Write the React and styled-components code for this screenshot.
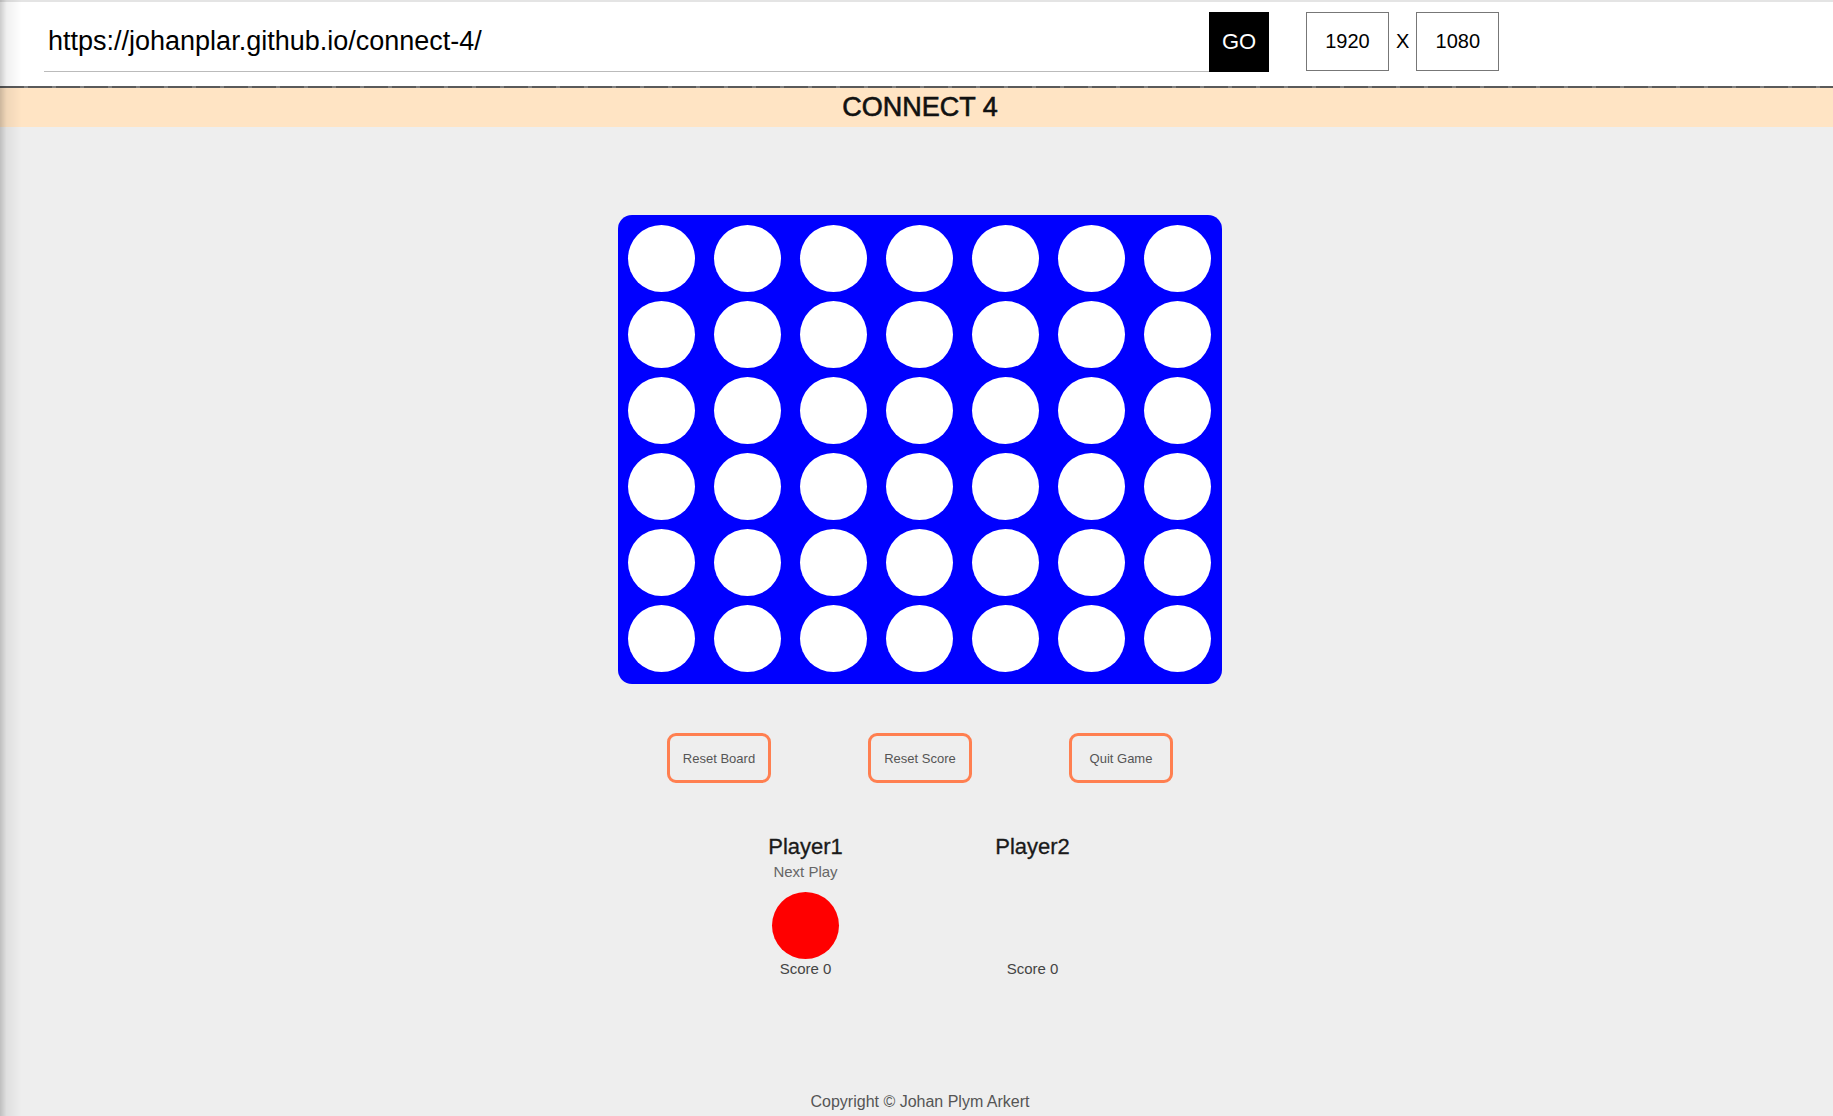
import React from 'react';
import styled, { createGlobalStyle } from 'styled-components';

const GlobalStyle = createGlobalStyle`
  html, body {
    margin: 0;
    padding: 0;
    background: #eeeeee;
    font-family: 'Liberation Sans', Arial, sans-serif;
  }
  * {
    box-sizing: border-box;
  }
`;

const Page = styled.div`
  position: relative;
  min-height: 100vh;
  background: #eeeeee;

  &::after {
    content: '';
    position: fixed;
    left: 0;
    top: 0;
    bottom: 0;
    width: 22px;
    pointer-events: none;
    background: linear-gradient(to right, rgba(0, 0, 0, 0.2), rgba(0, 0, 0, 0.06) 30%, rgba(0, 0, 0, 0));
  }
`;

const Toolbar = styled.div`
  display: flex;
  align-items: flex-start;
  height: 88px;
  padding: 10px 0 0 44px;
  background: #ffffff;
  border-top: 2px solid #e4e4e4;
  position: relative;

  &::after {
    content: '';
    position: absolute;
    left: 0;
    right: 0;
    bottom: 0;
    height: 2px;
    background: repeating-linear-gradient(to right, #5a5a5a 0 24px, #808080 24px 28px);
  }
`;

const UrlInput = styled.input`
  width: 1165px;
  height: 60px;
  padding: 0 0 0 4px;
  border: none;
  border-bottom: 1px solid #bbbbbb;
  outline: none;
  background: transparent;
  font-family: 'Liberation Sans', Arial, sans-serif;
  font-size: 27px;
  color: #000;
`;

const GoButton = styled.button`
  width: 60px;
  height: 60px;
  margin-right: 37px;
  border: none;
  padding: 0;
  background: #000000;
  color: #ffffff;
  font-family: 'Liberation Sans', Arial, sans-serif;
  font-size: 22px;
  cursor: pointer;
`;

const SizeInput = styled.input`
  width: 83px;
  height: 59px;
  padding: 0;
  border: 1px solid #777777;
  outline: none;
  text-align: center;
  font-family: 'Liberation Sans', Arial, sans-serif;
  font-size: 20px;
  color: #000;
`;

const Times = styled.span`
  margin: 0 7px;
  line-height: 59px;
  font-size: 20px;
  color: #000;
`;

const TitleBar = styled.header`
  height: 39px;
  background: #ffe4c4;
  display: flex;
  justify-content: center;
  align-items: center;
  padding-left: 7px;
  font-size: 27px;
  color: #111;
  -webkit-text-stroke: 0.6px #111;
`;

const Main = styled.main`
  display: flex;
  flex-direction: column;
  align-items: center;
  padding-left: 7px;
`;

const Board = styled.div`
  margin-top: 88px;
  display: grid;
  grid-template-columns: repeat(7, 67px);
  grid-auto-rows: 67px;
  column-gap: 19px;
  row-gap: 9px;
  padding: 10px 11px 12px 10px;
  background: #0000ff;
  border-radius: 14px;
`;

const Slot = styled.div`
  width: 67px;
  height: 67px;
  border-radius: 50%;
  background: ${(props) => props.color || '#ffffff'};
`;

const Controls = styled.div`
  margin-top: 49px;
  display: flex;
  gap: 97px;
`;

const ControlButton = styled.button`
  width: 104px;
  height: 50px;
  padding: 0;
  border: 3px solid #ff7f50;
  border-radius: 9px;
  background: transparent;
  font-family: 'Liberation Sans', Arial, sans-serif;
  font-size: 13px;
  color: #555;
  cursor: pointer;
`;

const Players = styled.div`
  margin-top: 51px;
  padding-right: 2px;
  display: grid;
  grid-template-columns: repeat(2, 227px);
`;

const PlayerCard = styled.div`
  display: flex;
  flex-direction: column;
  align-items: center;
`;

const PlayerName = styled.div`
  font-size: 22px;
  line-height: 26px;
  color: #1a1a1a;
  -webkit-text-stroke: 0.3px #1a1a1a;
`;

const NextLabel = styled.div`
  margin-top: 3px;
  font-size: 15px;
  line-height: 18px;
  color: #666;
  visibility: ${(props) => (props.active ? 'visible' : 'hidden')};
`;

const Disc = styled.div`
  margin-top: 11px;
  width: 67px;
  height: 67px;
  border-radius: 50%;
  background: ${(props) => (props.active ? props.color : 'transparent')};
`;

const Score = styled.div`
  margin-top: 1px;
  font-size: 15px;
  line-height: 18px;
  color: #444;
`;

const Footer = styled.footer`
  margin-top: 115px;
  font-size: 16px;
  line-height: 18px;
  color: #555;
`;

const ROWS = 6;
const COLS = 7;
const board = Array.from({ length: ROWS }, () => Array(COLS).fill(null));

const players = [
  { name: 'Player1', color: '#ff0000', score: 0, next: true },
  { name: 'Player2', color: '#ffff00', score: 0, next: false },
];

export default function App() {
  return (
    <Page>
      <GlobalStyle />
      <Toolbar>
        <UrlInput defaultValue="https://johanplar.github.io/connect-4/" />
        <GoButton>GO</GoButton>
        <SizeInput defaultValue="1920" />
        <Times>X</Times>
        <SizeInput defaultValue="1080" />
      </Toolbar>
      <TitleBar>CONNECT 4</TitleBar>
      <Main>
        <Board>
          {board.map((row, r) =>
            row.map((cell, c) => <Slot key={`${r}-${c}`} color={cell} />)
          )}
        </Board>
        <Controls>
          <ControlButton>Reset Board</ControlButton>
          <ControlButton>Reset Score</ControlButton>
          <ControlButton>Quit Game</ControlButton>
        </Controls>
        <Players>
          {players.map((p) => (
            <PlayerCard key={p.name}>
              <PlayerName>{p.name}</PlayerName>
              <NextLabel active={p.next}>Next Play</NextLabel>
              <Disc active={p.next} color={p.color} />
              <Score>Score {p.score}</Score>
            </PlayerCard>
          ))}
        </Players>
        <Footer>Copyright © Johan Plym Arkert</Footer>
      </Main>
    </Page>
  );
}
